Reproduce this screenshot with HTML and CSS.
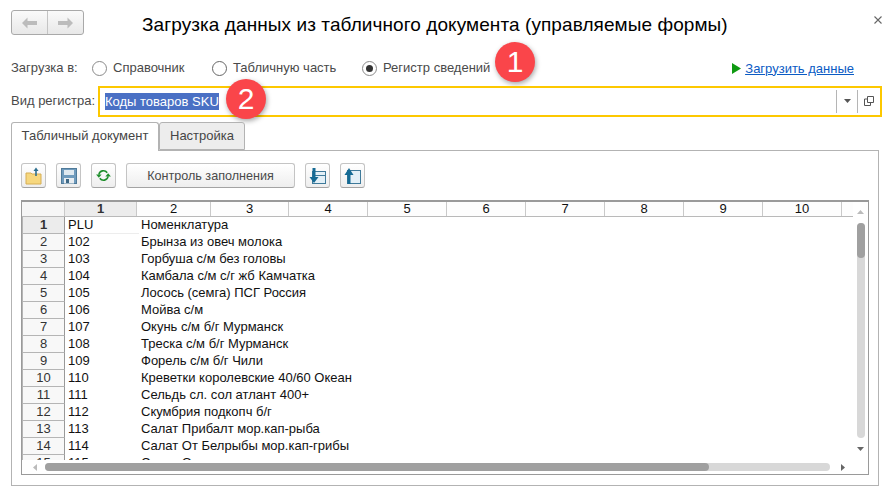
FILE: index.html
```html
<!DOCTYPE html>
<html lang="ru">
<head>
<meta charset="utf-8">
<title>Загрузка данных</title>
<link rel="stylesheet" href="styles.css">
</head>
<body>
<div class="page">
  <header class="head">
    <div class="nav">
      <span class="nav-btn"><svg width="15" height="12" viewBox="0 0 15 12"><path d="M0 6l5.500-5.500V4H15v4H5.500v3.500z" fill="#bcbcbc"/></svg></span>
      <span class="nav-btn"><svg width="15" height="12" viewBox="0 0 15 12"><path d="M15 6L9.500 .5V4H0v4h9.500v3.500z" fill="#bcbcbc"/></svg></span>
    </div>
    <h1 class="title">Загрузка данных из табличного документа (управляемые формы)</h1>
    <svg class="close" width="8" height="8" viewBox="0 0 8 8"><path d="M.5 .5l7 7M7.500 .5l-7 7" stroke="#666" stroke-width="1.100" fill="none"/></svg>
  </header>

  <div class="opts">
    <span class="lbl lbl-load">Загрузка в:</span>
    <span class="radio r1"></span><span class="lbl t1">Справочник</span>
    <span class="radio r2"></span><span class="lbl t2">Табличную часть</span>
    <span class="radio on r3"></span><span class="lbl t3">Регистр сведений</span>
    <a class="run" href="#"><svg width="9" height="11" viewBox="0 0 9 11"><path d="M0 0l9 5.500L0 11z" fill="#0f9a12"/></svg><span>Загрузить данные</span></a>
    <span class="badge b1">1</span>
  </div>

  <div class="reg">
    <span class="lbl lbl-reg">Вид регистра:</span>
    <div class="field">
      <span class="sel">Коды товаров SKU</span>
      <span class="badge b2">2</span>
      <span class="fbtn fdrop"><svg width="7" height="4" viewBox="0 0 7 4"><path d="M0 0h7L3.500 4z" fill="#555"/></svg></span>
      <span class="fbtn fopen"><svg width="10" height="10" viewBox="0 0 10 10"><path d="M3.500 .5h6v6h-6zM3.500 3H.5v6.500h6V6.500" fill="none" stroke="#555"/></svg></span>
    </div>
  </div>

  <div class="tabs">
    <span class="tab active">Табличный документ</span>
    <span class="tab">Настройка</span>
  </div>

  <section class="panel">
    <div class="tools">
      <span class="tool"><svg width="17" height="18" viewBox="0 0 17 18"><path d="M1 6h5l1 1h9v10H1z" fill="#f6d77e" stroke="#d6ae55"/><path d="M11 9V3" stroke="#2c6f8f" stroke-width="1.600"/><path d="M8.500 4L11 .5 13.500 4z" fill="#2c6f8f"/></svg></span>
      <span class="tool"><svg width="16" height="16" viewBox="0 0 16 16"><rect x=".5" y=".5" width="15" height="15" fill="#6f9bbd" stroke="#4f7a99"/><rect x="3" y="2" width="10" height="5" fill="#dfe9f0"/><rect x="3" y="10" width="10" height="5.500" fill="#e8edf1"/><rect x="5" y="11" width="3" height="4" fill="#3f6885"/></svg></span>
      <span class="tool"><svg width="15" height="13" viewBox="0 0 16 14"><path d="M3 6a5 5 0 0 1 9-2M13 8a5 5 0 0 1-9 2" fill="none" stroke="#1f8f2c" stroke-width="1.700"/><path d="M0 6h6L3 9.500zM10 8h6l-3-3.500z" fill="#1f8f2c"/></svg></span>
      <span class="tool wide">Контроль заполнения</span>
      <span class="tool"><svg width="17" height="18" viewBox="0 0 17 18"><rect x="3.500" y="4.500" width="13" height="12" fill="#e3f0f7" stroke="#3f7a9a"/><path d="M3.500 8.500h13" stroke="#3f7a9a"/><path d="M5 1v10" stroke="#156a94" stroke-width="3"/><path d="M.5 10h9L5 16z" fill="#156a94"/></svg></span>
      <span class="tool"><svg width="17" height="18" viewBox="0 0 17 18"><rect x="3.500" y="3.500" width="13" height="13" fill="#e3f0f7" stroke="#3f7a9a"/><path d="M5 7v10" stroke="#156a94" stroke-width="3"/><path d="M.5 8h9L5 1z" fill="#156a94"/></svg></span>
    </div>

    <div class="sheet">
      <div class="sheet-main">
        <div class="grid">
          <div class="hrow">
            <span class="hc corner"></span>
            <span class="hc cur">1</span><span class="hc">2</span><span class="hc">3</span><span class="hc">4</span><span class="hc">5</span><span class="hc">6</span><span class="hc">7</span><span class="hc">8</span><span class="hc">9</span><span class="hc">10</span><span class="hc"></span>
          </div>
          <div class="row"><span class="rh cur">1</span><span class="c1 first">PLU</span><span class="c2">Номенклатура</span></div>
          <div class="row"><span class="rh">2</span><span class="c1">102</span><span class="c2">Брынза из овеч молока</span></div>
          <div class="row"><span class="rh">3</span><span class="c1">103</span><span class="c2">Горбуша с/м без головы</span></div>
          <div class="row"><span class="rh">4</span><span class="c1">104</span><span class="c2">Камбала с/м с/г жб Камчатка</span></div>
          <div class="row"><span class="rh">5</span><span class="c1">105</span><span class="c2">Лосось (семга) ПСГ Россия</span></div>
          <div class="row"><span class="rh">6</span><span class="c1">106</span><span class="c2">Мойва с/м</span></div>
          <div class="row"><span class="rh">7</span><span class="c1">107</span><span class="c2">Окунь с/м б/г Мурманск</span></div>
          <div class="row"><span class="rh">8</span><span class="c1">108</span><span class="c2">Треска с/м б/г Мурманск</span></div>
          <div class="row"><span class="rh">9</span><span class="c1">109</span><span class="c2">Форель с/м б/г Чили</span></div>
          <div class="row"><span class="rh">10</span><span class="c1">110</span><span class="c2">Креветки королевские 40/60 Океан</span></div>
          <div class="row"><span class="rh">11</span><span class="c1">111</span><span class="c2">Сельдь сл. сол атлант 400+</span></div>
          <div class="row"><span class="rh">12</span><span class="c1">112</span><span class="c2">Скумбрия подкопч б/г</span></div>
          <div class="row"><span class="rh">13</span><span class="c1">113</span><span class="c2">Салат Прибалт мор.кап-рыба</span></div>
          <div class="row"><span class="rh">14</span><span class="c1">114</span><span class="c2">Салат От Белрыбы мор.кап-грибы</span></div>
          <div class="row"><span class="rh">15</span><span class="c1">115</span><span class="c2">Салат Океана мор.кап-овощ-кукуруза</span></div>
        </div>
        <div class="vbar">
          <svg class="arr-up" width="7" height="4" viewBox="0 0 7 4"><path d="M0 4h7L3.500 0z" fill="#bbb"/></svg>
          <div class="vtrack"><div class="vthumb"></div></div>
          <svg class="arr-dn" width="7" height="4" viewBox="0 0 7 4"><path d="M0 0h7L3.500 4z" fill="#666"/></svg>
        </div>
      </div>
      <div class="hbar">
        <svg width="4" height="7" viewBox="0 0 4 7"><path d="M4 0v7L0 3.500z" fill="#bbb"/></svg>
        <div class="htrack"><div class="hthumb"></div></div>
        <svg width="4" height="7" viewBox="0 0 4 7"><path d="M0 0v7l4-3.500z" fill="#666"/></svg>
      </div>
    </div>
  </section>
</div>
</body>
</html>
```
FILE: styles.css
```css
* { box-sizing: border-box; }
html, body { margin: 0; padding: 0; background: #fff; }
body { font-family: "Liberation Sans", Arial, sans-serif; font-size: 13px; color: #4a4a4a; }
.page { width: 892px; height: 501px; overflow: hidden; padding: 10px 10px 0 11px; }

.head { display: flex; align-items: flex-start; height: 40px; }
.nav { display: flex; width: 73px; height: 25px; border: 1px solid #a9a9a9; border-radius: 3px; background: linear-gradient(#fafafa, #e8e8e8); }
.nav-btn { flex: 1; display: flex; align-items: center; justify-content: center; }
.nav-btn + .nav-btn { border-left: 1px solid #c4c4c4; }
.title { margin: 4px 0 0 58px; font-size: 19px; letter-spacing: .08px; line-height: 22px; font-weight: 400; color: #000; white-space: nowrap; flex: 1; }
.close { margin: 6px 0 0 0; flex: none; }

.opts { position: relative; display: flex; align-items: center; height: 18px; margin-top: 9px; }
.lbl { white-space: nowrap; line-height: 18px; }
.lbl-load { width: 81px; }
.radio { flex: none; width: 15px; height: 15px; border: 1px solid #8a8a8a; border-radius: 50%; background: #fff; display: flex; align-items: center; justify-content: center; }
.radio.on::after { content: ""; width: 7px; height: 7px; border-radius: 50%; background: #333; }
.t1 { margin-left: 6px; width: 99px; }
.r2 { border-color: #666; }
.t2 { margin-left: 6px; width: 129px; }
.t3 { margin-left: 6px; }
.run { display: flex; align-items: center; gap: 4px; margin-left: auto; margin-right: 28px; color: #0b5bc4; }
.run span { text-decoration: underline; }

.badge { position: absolute; width: 40px; height: 40px; border-radius: 50%; background: #fa454a; color: #fff; font-size: 30px; line-height: 40px; text-align: center; box-shadow: 1px 2px 5px rgba(0,0,0,.35); }
.b1 { left: 484px; top: -17px; }
.b2 { left: 126px; top: -9px; }

.reg { display: flex; align-items: center; height: 30px; margin-top: 9px; }
.lbl-reg { width: 87px; }
.field { position: relative; flex: none; width: 784px; height: 31px; border: 2px solid #fdc800; display: flex; align-items: center; padding-left: 5px; background: #fff; }
.sel { background: #4a70c4; color: #fff; height: 17px; line-height: 17px; white-space: nowrap; }
.fbtn { display: flex; align-items: center; justify-content: center; height: 23px; width: 21px; border-left: 1px solid #b5b5b5; }
.fdrop { margin-left: auto; }
.fopen { width: 23px; }

.tabs { display: flex; height: 29px; margin-top: 6px; position: relative; z-index: 1; }
.tab { width: 86px; height: 28px; border: 1px solid #b3b3b3; border-bottom: 1px solid #b3b3b3; border-radius: 3px 3px 0 0; background: #ededed; text-align: center; line-height: 26px; color: #454545; }
.tab.active { width: 148px; height: 29px; background: #fff; border-bottom: 0; }

.panel { width: 868px; height: 336px; margin-top: -1px; border: 1px solid #b3b3b3; padding: 12px 9px 0; }
.tools { display: flex; gap: 10px; height: 25px; }
.tool { flex: none; width: 25px; height: 25px; border: 1px solid #c4c4c4; border-bottom-color: #a3a3a3; border-radius: 3px; background: linear-gradient(#fff, #eeeeee); display: flex; align-items: center; justify-content: center; }
.tool.wide { width: 169px; font-size: 12.600px; }

.sheet { width: 848px; height: 275px; margin-top: 12px; border: 1px solid #9a9a9a; border-top-width: 2px; overflow: hidden; display: flex; flex-direction: column; color: #111; }
.sheet-main { flex: 1; min-height: 0; display: flex; }
.grid { flex: 1; min-width: 0; overflow: hidden; }
.hrow { display: grid; grid-template-columns: 43px 72px 74px 78px repeat(7, 79px) 13px; height: 15px; border-bottom: 1px solid #b9b9b9; background: #fdfdfd; }
.hc { text-align: center; line-height: 14px; border-right: 1px solid #c9c9c9; }
.hc:last-child { border-right: 0; }
.hc.corner { background: #f6f6f6; }
.hc.cur { background: #ececec; font-weight: 700; color: #333; }
.row { display: flex; height: 17px; line-height: 15px; white-space: nowrap; }
.rh { flex: none; width: 43px; text-align: center; background: #f8f8f8; border-right: 1px solid #999; border-bottom: 1px solid #b5b5b5; border-left: 1px solid #b5b5b5; color: #333; }
.rh.cur { background: #ececec; font-weight: 700; }
.c1 { flex: none; width: 74px; padding-left: 3px; }
.c1.first { background: #fff; border-bottom: 1px solid #ededed; }
.c2 { flex: none; padding-left: 2px; }

.vbar { flex: none; width: 15px; display: flex; flex-direction: column; align-items: center; padding-top: 8px; }
.vtrack { width: 8px; height: 215px; margin-top: 9px; border-radius: 4px; background: #d8d8d8; }
.vthumb { height: 35px; border-radius: 4px; background: #a0a0a0; }
.arr-dn { margin-top: 9px; }

.hbar { flex: none; height: 14px; display: flex; align-items: center; padding-left: 11px; }
.htrack { width: 785px; height: 8px; margin-left: 8px; border-radius: 4px; background: #d8d8d8; }
.hthumb { width: 664px; height: 8px; border-radius: 4px; background: #a0a0a0; }
.hbar svg:last-child { margin-left: 11px; }
```
